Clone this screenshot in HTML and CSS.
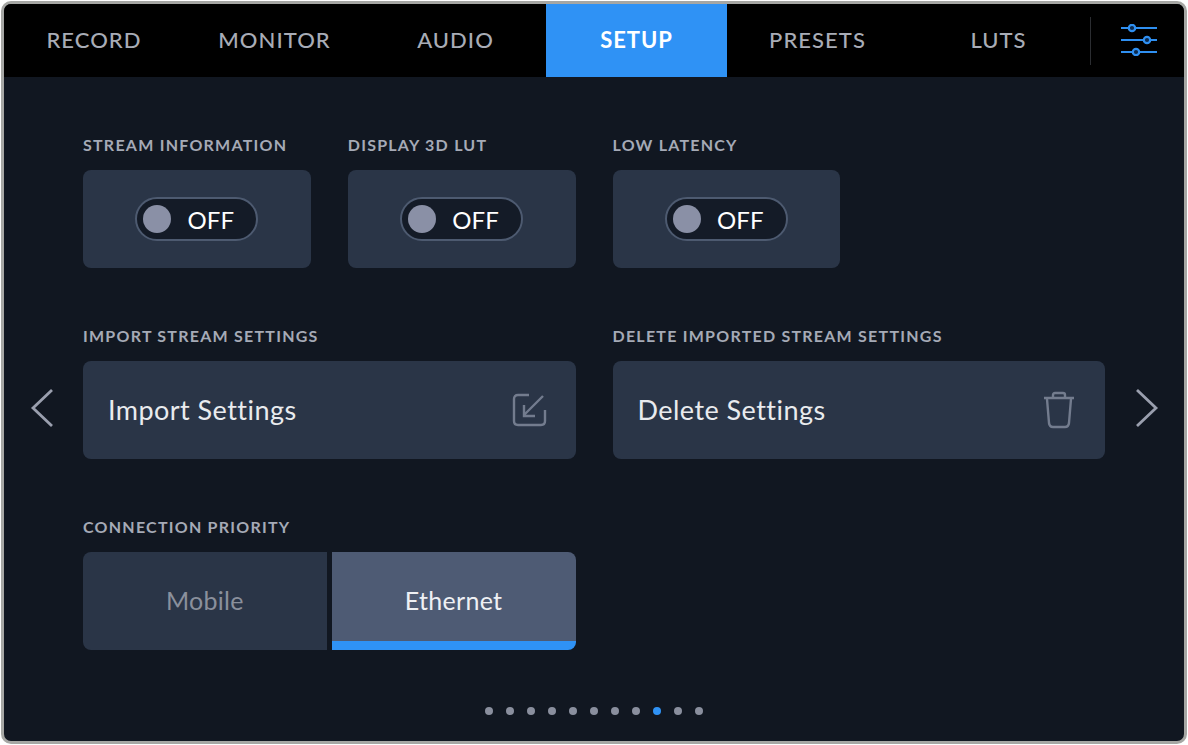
FILE: index.html
```html
<!DOCTYPE html>
<html lang="en">
<head>
<meta charset="utf-8">
<title>Setup</title>
<link rel="stylesheet" href="styles.css">
</head>
<body>
<div class="frame">
  <header class="topbar">
    <nav class="tabs">
      <div class="tab tab-first">RECORD</div>
      <div class="tab">MONITOR</div>
      <div class="tab">AUDIO</div>
      <div class="tab tab-active">SETUP</div>
      <div class="tab">PRESETS</div>
      <div class="tab">LUTS</div>
    </nav>
    <div class="divider"></div>
    <svg class="sliders" width="36" height="32" viewBox="0 0 36 32" fill="none">
      <path d="M0 4H36M0 16H36M0 28H36" stroke="#2f8ff0" stroke-width="2"/>
      <circle cx="11" cy="4" r="3.200" fill="#0d2a4d" stroke="#2f8ff0" stroke-width="2.200"/>
      <circle cx="26" cy="16" r="3.200" fill="#0d2a4d" stroke="#2f8ff0" stroke-width="2.200"/>
      <circle cx="15" cy="28" r="3.200" fill="#0d2a4d" stroke="#2f8ff0" stroke-width="2.200"/>
    </svg>
  </header>
  <main class="body">
    <div class="side side-left">
      <svg width="24" height="40" viewBox="0 0 24 40" fill="none"><path d="M22 2L3 20L22 38" stroke="#9a9fae" stroke-width="2.800"/></svg>
    </div>
    <div class="grid">
      <section class="field">
        <div class="label">STREAM INFORMATION</div>
        <div class="card card-center"><div class="toggle"><span class="knob"></span><span class="toggle-text">OFF</span></div></div>
      </section>
      <section class="field">
        <div class="label">DISPLAY 3D LUT</div>
        <div class="card card-center"><div class="toggle"><span class="knob"></span><span class="toggle-text">OFF</span></div></div>
      </section>
      <section class="field">
        <div class="label">LOW LATENCY</div>
        <div class="card card-center"><div class="toggle"><span class="knob"></span><span class="toggle-text">OFF</span></div></div>
      </section>
      <div class="spacer"></div>
      <section class="field span-2">
        <div class="label">IMPORT STREAM SETTINGS</div>
        <div class="card card-action">
          <span>Import Settings</span>
          <svg class="action-icon import" width="36" height="36" viewBox="0 0 36 36" fill="none" stroke="#737c8e" stroke-width="2.400">
            <path d="M17 3H6Q2 3 2 7V29Q2 33 6 33H29Q33 33 33 29V18"/>
            <path d="M31 4L12 23M12 13V24H23"/>
          </svg>
        </div>
      </section>
      <section class="field span-2">
        <div class="label">DELETE IMPORTED STREAM SETTINGS</div>
        <div class="card card-action">
          <span>Delete Settings</span>
          <svg class="action-icon trash" width="32" height="38" viewBox="0 0 32 38" fill="none" stroke="#737c8e" stroke-width="2.400">
            <path d="M1 7H31M10 6V4Q10 2 12 2H20Q22 2 22 4V6"/>
            <path d="M4 8L6 32Q6.500 36 10 36H22Q25.500 36 26 32L28 8"/>
          </svg>
        </div>
      </section>
      <section class="field span-2">
        <div class="label">CONNECTION PRIORITY</div>
        <div class="segment">
          <div class="seg seg-off">Mobile</div>
          <div class="seg seg-on">Ethernet</div>
        </div>
      </section>
    </div>
    <div class="side side-right">
      <svg width="24" height="40" viewBox="0 0 24 40" fill="none"><path d="M2 2L21 20L2 38" stroke="#9a9fae" stroke-width="2.800"/></svg>
    </div>
  </main>
  <footer class="dots">
    <span class="dot"></span><span class="dot"></span><span class="dot"></span><span class="dot"></span><span class="dot"></span><span class="dot"></span><span class="dot"></span><span class="dot"></span><span class="dot dot-active"></span><span class="dot"></span><span class="dot"></span>
  </footer>
</div>
</body>
</html>
```
FILE: styles.css
```css
* { box-sizing: border-box; }
html, body { margin: 0; height: 100%; background: #fff; }
body { padding: 1px; font-family: Lato, "Open Sans", sans-serif; }
.frame {
  width: 1186px;
  height: 743px;
  border: 3px solid #a6a7a4;
  border-radius: 10px;
  background: #111721;
  overflow: hidden;
  display: flex;
  flex-direction: column;
}
.topbar { height: 73px; background: #000; display: flex; align-items: center; flex: none; }
.tabs { display: flex; height: 100%; }
.tab {
  width: 181px;
  display: flex;
  align-items: center;
  justify-content: center;
  padding-bottom: 3px;
  color: #a8acb6;
  font-size: 22px;
  font-weight: 500;
  letter-spacing: 1.050px;
}
.tab-first { width: 180px; }
.tab-active { background: #2f92f5; color: #fff; font-weight: 700; letter-spacing: 0.900px; }
.divider { width: 1px; height: 48px; margin-left: 1px; background: #2b2d31; }
.sliders { margin-left: 30px; margin-bottom: 2px; }
.body { display: flex; flex: none; padding-top: 57px; }
.side { width: 79px; height: 548px; display: flex; align-items: center; flex: none; }
.side-left { justify-content: flex-start; padding-left: 26px; }
.side-right { justify-content: flex-end; padding-right: 25px; }
.grid {
  width: 1022px;
  display: grid;
  grid-template-columns: repeat(4, 1fr);
  column-gap: 37px;
  row-gap: 57px;
  align-content: start;
  flex: none;
}
.span-2 { grid-column: span 2; }
.label {
  height: 36px;
  color: #a5aab6;
  font-size: 16px;
  font-weight: 700;
  letter-spacing: 1.240px;
  line-height: 22px;
}
.card { height: 98px; background: #2a3547; border-radius: 8px; }
.card-center { display: flex; align-items: center; justify-content: center; }
.toggle {
  width: 123px;
  height: 44px;
  border: 2px solid #4d5a70;
  border-radius: 22px;
  background: #141b27;
  display: flex;
  align-items: center;
  padding-left: 6px;
}
.knob { width: 28px; height: 28px; border-radius: 50%; background: #8a90a6; flex: none; }
.toggle-text { color: #fff; font-size: 24px; margin-left: 16px; letter-spacing: 0.200px; }
.card-action {
  display: flex;
  align-items: center;
  justify-content: space-between;
  padding: 0 30px 2px 25px;
  color: #e9ebee;
  font-size: 27px;
  letter-spacing: 0.450px;
}
.action-icon.import { margin: 2px -2px 0 0; }
.action-icon.trash { margin-top: 1px; }
.segment { display: flex; gap: 5px; height: 98px; }
.seg {
  flex: 1;
  display: flex;
  align-items: center;
  justify-content: center;
  font-size: 25px;
  letter-spacing: 0.300px;
}
.seg-off { background: #2a3547; color: #8a909c; border-radius: 8px 0 0 8px; padding-bottom: 2px; }
.seg-on { background: #4e5b74; color: #eef0f4; border-radius: 0 8px 8px 0; border-bottom: 9px solid #2f92f5; padding-top: 7px; }
.dots { display: flex; justify-content: center; gap: 13px; padding-top: 25px; }
.dot { width: 8px; height: 8px; border-radius: 50%; background: #8a8f9e; }
.dot-active { background: #2f92f5; }
```
